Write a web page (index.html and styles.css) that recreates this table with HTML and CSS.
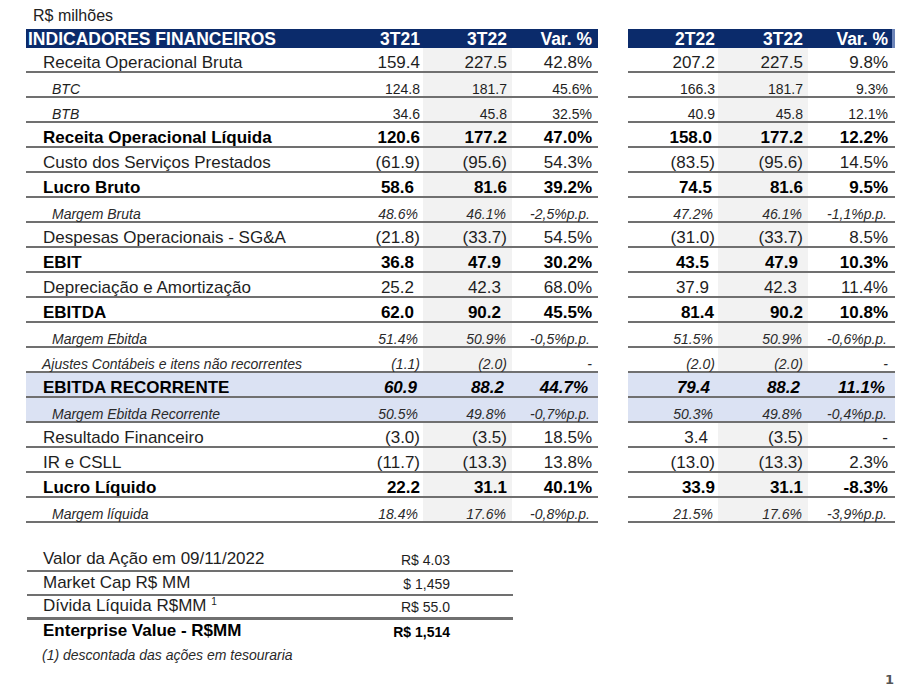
FILE: index.html
```html
<!DOCTYPE html>
<html lang="pt-BR">
<head>
<meta charset="utf-8">
<title>Indicadores Financeiros</title>
<link rel="stylesheet" href="styles.css">
</head>
<body>
<div class="page">
  <div class="unit">R$ milhões</div>
  <div class="tables">
    <div class="fin fin-l">
      <div class="row head"><div class="c lab">INDICADORES FINANCEIROS</div><div class="c">3T21</div><div class="c">3T22</div><div class="c">Var. %</div></div>
      <div class="row"><div class="c lab">Receita Operacional Bruta</div><div class="c">159.4</div><div class="c">227.5</div><div class="c">42.8%</div></div>
      <div class="row sm"><div class="c lab">BTC</div><div class="c">124.8</div><div class="c">181.7</div><div class="c">45.6%</div></div>
      <div class="row sm"><div class="c lab">BTB</div><div class="c">34.6</div><div class="c">45.8</div><div class="c">32.5%</div></div>
      <div class="row b"><div class="c lab">Receita Operacional Líquida</div><div class="c">120.6</div><div class="c">177.2</div><div class="c">47.0%</div></div>
      <div class="row"><div class="c lab">Custo dos Serviços Prestados</div><div class="c">(61.9)</div><div class="c">(95.6)</div><div class="c">54.3%</div></div>
      <div class="row b"><div class="c lab">Lucro Bruto</div><div class="c x6">58.6</div><div class="c">81.6</div><div class="c">39.2%</div></div>
      <div class="row sm it"><div class="c lab">Margem Bruta</div><div class="c x2">48.6%</div><div class="c x1">46.1%</div><div class="c x2">-2,5%p.p.</div></div>
      <div class="row"><div class="c lab">Despesas Operacionais - SG&amp;A</div><div class="c">(21.8)</div><div class="c">(33.7)</div><div class="c">54.5%</div></div>
      <div class="row b"><div class="c lab">EBIT</div><div class="c x6">36.8</div><div class="c x6">47.9</div><div class="c">30.2%</div></div>
      <div class="row"><div class="c lab">Depreciação e Amortização</div><div class="c x6">25.2</div><div class="c x6">42.3</div><div class="c">68.0%</div></div>
      <div class="row b"><div class="c lab">EBITDA</div><div class="c x6">62.0</div><div class="c x6">90.2</div><div class="c">45.5%</div></div>
      <div class="row sm it"><div class="c lab">Margem Ebitda</div><div class="c x2">51.4%</div><div class="c x1">50.9%</div><div class="c x2">-0,5%p.p.</div></div>
      <div class="row sm it"><div class="c lab lab-aj">Ajustes Contábeis e itens não recorrentes</div><div class="c">(1.1)</div><div class="c">(2.0)</div><div class="c">-</div></div>
      <div class="row b bi hl"><div class="c lab">EBITDA RECORRENTE</div><div class="c x3">60.9</div><div class="c x3">88.2</div><div class="c x4">44.7%</div></div>
      <div class="row sm it hl"><div class="c lab">Margem Ebitda Recorrente</div><div class="c x2">50.5%</div><div class="c x1">49.8%</div><div class="c x2">-0,7%p.p.</div></div>
      <div class="row"><div class="c lab">Resultado Financeiro</div><div class="c">(3.0)</div><div class="c">(3.5)</div><div class="c">18.5%</div></div>
      <div class="row"><div class="c lab">IR e CSLL</div><div class="c">(11.7)</div><div class="c">(13.3)</div><div class="c">13.8%</div></div>
      <div class="row b"><div class="c lab">Lucro Líquido</div><div class="c">22.2</div><div class="c">31.1</div><div class="c">40.1%</div></div>
      <div class="row sm it"><div class="c lab">Margem líquida</div><div class="c x2">18.4%</div><div class="c x1">17.6%</div><div class="c x2">-0,8%p.p.</div></div>
    </div>

    <div class="fin fin-r">
      <div class="row head"><div class="c">2T22</div><div class="c">3T22</div><div class="c">Var. %</div></div>
      <div class="row"><div class="c">207.2</div><div class="c">227.5</div><div class="c">9.8%</div></div>
      <div class="row sm"><div class="c">166.3</div><div class="c">181.7</div><div class="c">9.3%</div></div>
      <div class="row sm"><div class="c">40.9</div><div class="c">45.8</div><div class="c">12.1%</div></div>
      <div class="row b"><div class="c x3">158.0</div><div class="c">177.2</div><div class="c">12.2%</div></div>
      <div class="row"><div class="c">(83.5)</div><div class="c">(95.6)</div><div class="c">14.5%</div></div>
      <div class="row b"><div class="c x3">74.5</div><div class="c">81.6</div><div class="c">9.5%</div></div>
      <div class="row sm it"><div class="c x2">47.2%</div><div class="c x1">46.1%</div><div class="c x1">-1,1%p.p.</div></div>
      <div class="row"><div class="c">(31.0)</div><div class="c">(33.7)</div><div class="c">8.5%</div></div>
      <div class="row b"><div class="c x6">43.5</div><div class="c x5">47.9</div><div class="c">10.3%</div></div>
      <div class="row"><div class="c x6">37.9</div><div class="c x6">42.3</div><div class="c">11.4%</div></div>
      <div class="row b"><div class="c x1">81.4</div><div class="c">90.2</div><div class="c">10.8%</div></div>
      <div class="row sm it"><div class="c x2">51.5%</div><div class="c x1">50.9%</div><div class="c x1">-0,6%p.p.</div></div>
      <div class="row sm it"><div class="c">(2.0)</div><div class="c">(2.0)</div><div class="c">-</div></div>
      <div class="row b bi hl"><div class="c x5">79.4</div><div class="c x3">88.2</div><div class="c x3">11.1%</div></div>
      <div class="row sm it hl"><div class="c x2">50.3%</div><div class="c x1">49.8%</div><div class="c x1">-0,4%p.p.</div></div>
      <div class="row"><div class="c x7">3.4</div><div class="c">(3.5)</div><div class="c">-</div></div>
      <div class="row"><div class="c">(13.0)</div><div class="c">(13.3)</div><div class="c">2.3%</div></div>
      <div class="row b"><div class="c">33.9</div><div class="c">31.1</div><div class="c">-8.3%</div></div>
      <div class="row sm it"><div class="c x2">21.5%</div><div class="c x1">17.6%</div><div class="c x1">-3,9%p.p.</div></div>
    </div>
  </div>

  <div class="ev">
    <div class="ev-row"><div class="ev-lab">Valor da Ação em 09/11/2022</div><div class="ev-val">R$ 4.03</div></div>
    <div class="ev-row"><div class="ev-lab">Market Cap R$ MM</div><div class="ev-val">$ 1,459</div></div>
    <div class="ev-row ev-thick"><div class="ev-lab">Dívida Líquida R$MM <sup class="sup">1</sup></div><div class="ev-val">R$ 55.0</div></div>
    <div class="ev-row ev-total"><div class="ev-lab">Enterprise Value - R$MM</div><div class="ev-val">R$ 1,514</div></div>
  </div>
  <p class="note">(1) descontada das ações em tesouraria</p>
  <div class="pagenum">1</div>
</div>
</body>
</html>
```

FILE: styles.css
```css
html, body {
  margin: 0;
  padding: 0;
  background: #ffffff;
}

body {
  font-family: "Liberation Sans", Arial, sans-serif;
  color: #1e1e1e;
  width: 911px;
  height: 687px;
  overflow: hidden;
}

.page {
  padding-left: 26px;
}

.unit {
  height: 29px;
  box-sizing: border-box;
  padding-top: 8px;
  padding-left: 7px;
  font-size: 16px;
  line-height: 16px;
  color: #222;
}

.tables {
  display: flex;
  gap: 30px;
  align-items: flex-start;
}

.row {
  display: grid;
  height: 25px;
  box-sizing: border-box;
  border-bottom: 2px solid #707070;
  font-size: 17px;
}

.fin-l .row {
  width: 572px;
  grid-template-columns: 311px 86px 89px 86px;
}

.fin-r .row {
  width: 267px;
  grid-template-columns: 90px 90px 87px;
}

.c {
  display: flex;
  align-items: flex-end;
  justify-content: flex-end;
  line-height: 17px;
  white-space: nowrap;
  padding-right: calc(var(--pr, 0px) + var(--x, 0px));
}

.fin-l .c:nth-child(2) { --pr: 3px; }
.fin-l .c:nth-child(3) { --pr: 5px; background: #f2f2f2; }
.fin-l .c:nth-child(4) { --pr: 6px; }
.fin-r .c:nth-child(1) { --pr: 3px; }
.fin-r .c:nth-child(2) { --pr: 5px; background: #f2f2f2; }
.fin-r .c:nth-child(3) { --pr: 7px; }

.x1 { --x: 1px; }
.x2 { --x: 2px; }
.x3 { --x: 3px; }
.x4 { --x: 4px; }
.x5 { --x: 5px; }
.x6 { --x: 6px; }
.x7 { --x: 7px; }

.lab {
  justify-content: flex-start;
  padding-left: 17px;
}

.row.head {
  height: 19px;
  border-bottom: 0;
  background: #0b2b6b;
  color: #ffffff;
  font-weight: bold;
  font-size: 17.5px;
}

.row.head .c {
  background: transparent;
  line-height: 18px;
}

.row.head .lab {
  padding-left: 2px;
}

.fin-r .row.head {
  box-shadow: inset -3px 0 0 #6d85b9;
}

.row.b {
  font-weight: bold;
  color: #000;
}

.row.bi .c:not(.lab) {
  font-style: italic;
}

.row.sm {
  font-size: 14px;
}

.row.sm .c {
  line-height: 13px;
}

.row.sm .lab {
  padding-left: 26px;
}

.row.sm .lab-aj {
  padding-left: 16px;
}

.row.it .c {
  font-style: italic;
  color: #2a2a2a;
}

.row.sm:not(.it) .lab {
  font-style: italic;
}

.row.hl {
  background: #dbe2f3;
}

.row.hl .c {
  background: transparent;
}

/* bottom block */
.ev {
  width: 486px;
  margin-left: 1px;
  margin-top: 25px;
}

.ev-row {
  display: grid;
  grid-template-columns: 1fr auto;
  height: 24px;
  box-sizing: border-box;
  border-bottom: 2px solid #707070;
  align-items: end;
}

.ev-thick {
  border-bottom-width: 3px;
}

.ev-lab {
  font-size: 17px;
  line-height: 18px;
  padding-left: 16px;
  padding-bottom: 2px;
  white-space: nowrap;
}

.ev-val {
  font-size: 14px;
  line-height: 16px;
  padding-bottom: 2px;
  padding-right: 63px;
  text-align: right;
  white-space: nowrap;
}

.ev-total {
  border-bottom: 0;
  font-weight: bold;
  color: #000;
}

.ev-total .ev-lab,
.ev-total .ev-val {
  padding-bottom: 4px;
}

.sup {
  font-size: 10px;
  line-height: 0;
  vertical-align: 6px;
}

.note {
  margin: 3px 0 0;
  padding-left: 16px;
  font-size: 14px;
  line-height: 16px;
  font-style: italic;
  color: #2a2a2a;
}

.pagenum {
  margin-top: 9px;
  padding-right: 17px;
  text-align: right;
  font-family: "DejaVu Sans", sans-serif;
  font-size: 13px;
  line-height: 16px;
  font-weight: bold;
  color: #555;
}
```
